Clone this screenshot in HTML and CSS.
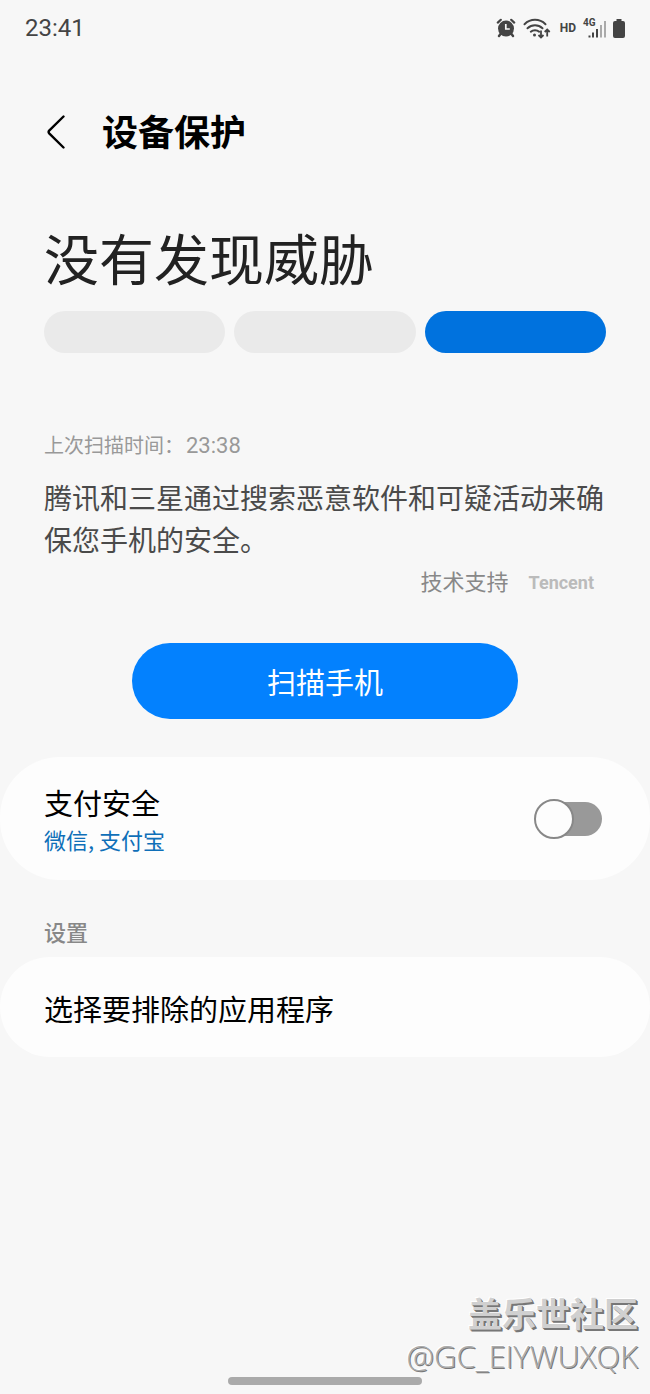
FILE: index.html
```html
<!DOCTYPE html>
<html lang="zh-CN">
<head>
<meta charset="utf-8">
<meta name="viewport" content="width=device-width, initial-scale=1">
<title>设备保护</title>
<link rel="stylesheet" href="styles.css">
</head>
<body>
<div class="screen">
  <header class="status-bar">
    <time class="clock">23:41</time>
    <div class="status-icons">
      <svg class="icon-alarm" width="20" height="20" viewBox="0 0 20 20" aria-hidden="true">
        <g fill="none" stroke="#444" stroke-linecap="round">
          <path d="M1.8 4.600 4.800 1.800M18.200 4.600 15.200 1.800" stroke-width="2.200"/>
          <path d="M4.500 16 3 18M15.500 16l1.500 2" stroke-width="2.400"/>
        </g>
        <circle cx="10" cy="10.600" r="8" fill="#444"/>
        <path d="M9.800 6v5h4" fill="none" stroke="#f7f7f7" stroke-width="1.700"/>
      </svg>
      <svg class="icon-wifi" width="28" height="21" viewBox="0 0 28 21" aria-hidden="true">
        <g fill="none" stroke="#444" stroke-width="2" stroke-linecap="round">
          <path d="M1.500 6.200C7.500.400 16.500.400 22.500 6.200"/>
          <path d="M4.500 10.200c4.300-4 10.700-4 15 0"/>
          <path d="M7.800 13.700c2.300-2.100 6.100-2.100 8.400 0"/>
        </g>
        <circle cx="11.500" cy="17" r="1.500" fill="#444"/>
        <path d="M18 12.500v7m-2.500-2.500 2.500 2.500 2.500-2.500M24.200 18.500v-7m-2.500 2.500 2.500-2.500 2.500 2.500" fill="none" stroke="#444" stroke-width="1.800"/>
      </svg>
      <span class="hd">HD</span>
      <span class="cell">
        <span class="cell-type">4G</span>
        <svg width="18" height="18" viewBox="0 0 18 18" aria-hidden="true">
          <path d="M.5 15.500h2v2h-2zM4 12.500h2v5H4zM8 9h2v8.500H8z" fill="#444"/>
          <path d="M12 5h2v12.500h-2zM16 1h2v16.500h-2z" fill="#aaa"/>
        </svg>
      </span>
      <svg class="icon-battery" width="12" height="19" viewBox="0 0 12 19" aria-hidden="true">
        <path d="M3.500 0h5v2H10a2 2 0 0 1 2 2v13a2 2 0 0 1-2 2H2a2 2 0 0 1-2-2V4a2 2 0 0 1 2-2h1.500z" fill="#444"/>
      </svg>
    </div>
  </header>

  <nav class="app-bar">
    <button class="back" type="button" aria-label="返回">
      <svg width="20" height="34" viewBox="0 0 20 34" aria-hidden="true">
        <path d="M17.500 1.500 3.200 15.600Q2 17 3.200 18.400L17.500 32.500" fill="none" stroke="#000" stroke-width="2.400" stroke-linecap="round"/>
      </svg>
    </button>
    <h1 class="title">设备保护</h1>
  </nav>

  <main class="content">
    <section class="summary">
      <h2 class="headline">没有发现威胁</h2>
      <div class="levels">
        <span class="level"></span>
        <span class="level"></span>
        <span class="level level-active"></span>
      </div>
      <p class="last-scan">上次扫描时间：<time class="scan-time">23:38</time></p>
      <p class="description">腾讯和三星通过搜索恶意软件和可疑活动来确保您手机的安全。</p>
      <p class="powered">技术支持 <strong class="brand">Tencent</strong></p>
      <button class="scan" type="button">扫描手机</button>
    </section>

    <label class="card payment" for="pay">
      <span class="card-text">
        <span class="card-title">支付安全</span>
        <span class="card-note">微信, 支付宝</span>
      </span>
      <input class="switch" id="pay" type="checkbox" role="switch">
    </label>

    <h3 class="group-title">设置</h3>
    <a class="card exclude" href="#exclude"><span class="card-title">选择要排除的应用程序</span></a>
  </main>

  <footer class="footer">
    <p class="community">盖乐世社区</p>
    <p class="author">@GC_EIYWUXQK</p>
    <span class="home-handle"></span>
  </footer>
</div>
</body>
</html>
```
FILE: styles.css
```css
*,
*::before,
*::after {
  box-sizing: border-box;
}

body {
  margin: 0;
  background: #f7f7f7;
  color: #000;
  font-family: Roboto, "Noto Sans CJK SC", sans-serif;
}

h1, h2, h3, p {
  margin: 0;
  font-weight: 400;
}

button {
  padding: 0;
  border: 0;
  background: none;
  font: inherit;
  cursor: pointer;
}

.screen {
  display: flex;
  flex-direction: column;
  min-height: 100vh;
}

.status-bar {
  display: flex;
  align-items: center;
  justify-content: space-between;
  height: 56px;
  padding: 0 25px;
  color: #444;
}

.clock {
  font-size: 24px;
}

.status-icons {
  display: flex;
  align-items: center;
}

.icon-wifi {
  margin-left: 7px;
}

.hd {
  margin-left: 9px;
  font-size: 12px;
  font-weight: 700;
}

.cell {
  position: relative;
  display: flex;
  margin-left: 12px;
  padding-top: 2px;
}

.cell-type {
  position: absolute;
  left: -5px;
  top: -1px;
  font-size: 10px;
  line-height: 12px;
  font-weight: 700;
}

.icon-battery {
  margin-left: 7px;
}

.app-bar {
  display: flex;
  align-items: center;
  gap: 36px;
  height: 152px;
  padding: 0 46px;
}

.back {
  display: flex;
}

.title {
  padding-top: 4px;
  font-size: 36px;
  line-height: 52px;
  font-weight: 700;
}

.content {
  flex: 1;
}

.summary {
  display: flex;
  flex-direction: column;
  padding: 13px 44px 38px;
}

.headline {
  color: #222;
  font-size: 55px;
  line-height: 80px;
}

.levels {
  display: grid;
  grid-template-columns: repeat(3, 1fr);
  gap: 9px;
  margin-top: 10px;
}

.level {
  height: 42px;
  border-radius: 21px;
  background: #eaeaea;
}

.level-active {
  background: #0072de;
}

.last-scan {
  margin-top: 77px;
  color: #999;
  font-size: 20px;
  line-height: 32px;
}

.scan-time {
  padding-left: 2px;
  font-size: 22px;
}

.description {
  margin-top: 17px;
  color: #4a4a4a;
  font-size: 28px;
  line-height: 42px;
}

.powered {
  display: flex;
  align-items: center;
  justify-content: flex-end;
  gap: 20px;
  margin-top: 4px;
  padding-right: 12px;
  color: #888;
  font-size: 22px;
  line-height: 32px;
}

.brand {
  color: #bbb;
  font-size: 18px;
  font-weight: 700;
}

.scan {
  align-self: center;
  width: 100%;
  max-width: 386px;
  height: 76px;
  margin-top: 44px;
  border-radius: 38px;
  background: #0381fe;
  color: #fff;
  font-size: 29px;
}

.card {
  display: flex;
  align-items: center;
  justify-content: space-between;
  border-radius: 50px;
  background: #fdfdfd;
  color: #000;
  text-decoration: none;
}

.payment {
  min-height: 123px;
  padding: 0 48px 0 44px;
  border-radius: 60px;
}

.card-text {
  display: flex;
  flex-direction: column;
}

.card-title {
  font-size: 29px;
  line-height: 40px;
}

.card-note {
  color: #0f6fb8;
  font-family: "Noto Sans CJK SC", sans-serif;
  font-size: 22px;
  line-height: 28px;
}

.switch {
  position: relative;
  width: 68px;
  height: 40px;
  margin: 0;
  appearance: none;
  cursor: pointer;
}

.switch::before {
  content: "";
  position: absolute;
  inset: 3px 0 3px 2px;
  border-radius: 17px;
  background: #999;
}

.switch::after {
  content: "";
  position: absolute;
  top: 0;
  left: 0;
  width: 40px;
  height: 40px;
  border: 2px solid #888;
  border-radius: 50%;
  background: #fdfdfd;
}

.switch:checked::before {
  background: #0381fe;
}

.switch:checked::after {
  left: 28px;
}

.group-title {
  padding: 38px 44px 7px;
  color: #888;
  font-size: 22px;
  line-height: 32px;
  font-weight: 500;
}

.exclude {
  min-height: 100px;
  padding: 8px 44px 0;
}

.footer {
  display: flex;
  flex-direction: column;
  align-items: flex-end;
  padding: 0 12px 9px;
}

.community {
  color: #d0d0d0;
  font-size: 34px;
  line-height: 40px;
  font-weight: 700;
  text-shadow: 1px 1px 0 #777, 2px 2px 0 #777, -1px -1px 0 #fff;
}

.author {
  color: #aaa;
  font-family: "Open Sans", "Noto Sans", sans-serif;
  font-size: 31px;
  font-weight: 300;
  line-height: 42px;
  text-shadow: 1px 1px 0 #777, -1px -1px 0 #fff;
}

.home-handle {
  align-self: center;
  width: 31%;
  height: 8px;
  border-radius: 4px;
  background: #aaa;
}
```
